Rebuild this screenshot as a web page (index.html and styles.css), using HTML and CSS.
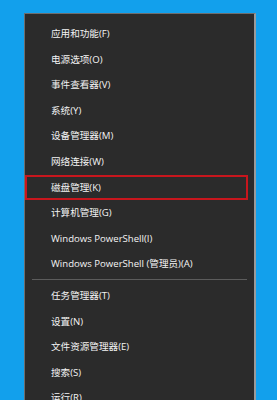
FILE: index.html
```html
<!DOCTYPE html>
<html lang="zh-CN">
<head>
<meta charset="utf-8">
<link rel="stylesheet" href="styles.css">
</head>
<body>
<div class="menu">
  <ul class="group">
    <li class="item">应用和功能(F)</li>
    <li class="item">电源选项(O)</li>
    <li class="item">事件查看器(V)</li>
    <li class="item">系统(Y)</li>
    <li class="item">设备管理器(M)</li>
    <li class="item">网络连接(W)</li>
    <li class="item item-marked">磁盘管理(K)</li>
    <li class="item">计算机管理(G)</li>
    <li class="item">Windows PowerShell(I)</li>
    <li class="item">Windows PowerShell (管理员)(A)</li>
  </ul>
  <div class="separator"></div>
  <ul class="group">
    <li class="item">任务管理器(T)</li>
    <li class="item">设置(N)</li>
    <li class="item">文件资源管理器(E)</li>
    <li class="item">搜索(S)</li>
    <li class="item">运行(R)</li>
  </ul>
</div>
</body>
</html>
```
FILE: styles.css
```css
html, body {
  margin: 0;
  padding: 0;
  height: 100%;
  overflow: hidden;
}
body {
  background: #12a0ec;
  font-family: "Open Sans", "Noto Sans CJK SC", sans-serif;
  font-size: 9.6px;
  color: #f4f4f4;
}
.menu {
  margin: 13px 0 0 24px;
  width: 229px;
  height: 420px;
  background: #2b2b2b;
  border: 1px solid #6e6e6e;
  border-right: 2px solid #9a9a9a;
  border-bottom: none;
  padding-top: 7px;
  box-sizing: content-box;
}
.group {
  list-style: none;
  margin: 0;
  padding: 0;
}
.item {
  height: 25.6px;
  line-height: 25.6px;
  padding-left: 26px;
  white-space: nowrap;
  box-sizing: border-box;
}
.item-marked {
  margin-right: 6px;
  border: 2px solid #c8161d;
  padding-left: 24px;
  line-height: 21.6px;
}
.separator {
  height: 1px;
  background: #5c5c5c;
  margin: 2px 7px 3px 7px;
}
```
